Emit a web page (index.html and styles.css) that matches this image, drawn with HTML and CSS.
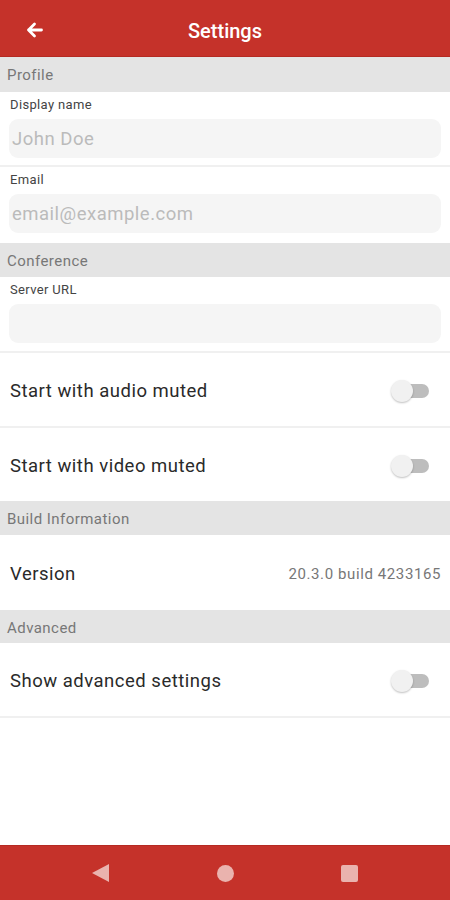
FILE: index.html
```html
<!DOCTYPE html>
<html lang="en">
<head>
  <meta charset="UTF-8">
  <title>Settings</title>
  <link rel="stylesheet" href="styles.css">
</head>
<body>
  <div class="app">
    <header class="topbar">
      <button class="back" aria-label="Back">
        <svg width="20" height="20" viewBox="0 0 20 20"><path d="M17.5 10H4.5M10.5 4L4.5 10L10.5 16" fill="none" stroke="#fff" stroke-width="2.8" stroke-linecap="round" stroke-linejoin="round"/></svg>
      </button>
      <h1>Settings</h1>
    </header>

    <main class="content">
      <div class="section-title first">Profile</div>
      <div class="field">
        <label>Display name</label>
        <div class="input placeholder">John Doe</div>
      </div>
      <div class="field last">
        <label>Email</label>
        <div class="input placeholder">email@example.com</div>
      </div>

      <div class="section-title">Conference</div>
      <div class="field server">
        <label>Server URL</label>
        <div class="input"></div>
      </div>
      <div class="row">
        <span>Start with audio muted</span>
        <span class="switch"><span class="knob"></span></span>
      </div>
      <div class="row last">
        <span>Start with video muted</span>
        <span class="switch"><span class="knob"></span></span>
      </div>

      <div class="section-title">Build Information</div>
      <div class="row last version">
        <span>Version</span>
        <span class="value">20.3.0 build 4233165</span>
      </div>

      <div class="section-title short">Advanced</div>
      <div class="row">
        <span>Show advanced settings</span>
        <span class="switch"><span class="knob"></span></span>
      </div>
    </main>

    <nav class="navbar">
      <span class="nav-back"></span>
      <span class="nav-home"></span>
      <span class="nav-recent"></span>
    </nav>
  </div>
</body>
</html>
```

FILE: styles.css
```css
body {
  margin: 0;
  font-family: Roboto, "Liberation Sans", sans-serif;
  background: #fff;
  color: #222;
}

.app {
  height: 900px;
  display: flex;
  flex-direction: column;
}

.topbar {
  height: 56px;
  background-color: #c5322a;
  border-bottom: 1px solid #b52a22;
  display: flex;
  align-items: center;
  justify-content: center;
  position: relative;
  flex-shrink: 0;
}

.topbar h1 {
  margin: 0;
  color: #fff;
  font-size: 20px;
  font-weight: 500;
  padding-top: 6px;
}

.back {
  position: absolute;
  left: 24px;
  top: 20px;
  background: none;
  border: none;
  padding: 0;
  width: 20px;
  height: 20px;
}

.content {
  flex: 1;
}

.section-title {
  height: 34px;
  line-height: 37px;
  background-color: #e4e4e4;
  color: #777;
  font-size: 15px;
  letter-spacing: 0.45px;
  padding-left: 7px;
}

.section-title.first {
  height: 35px;
}

.section-title.short {
  height: 33px;
  line-height: 36px;
}

.field {
  padding: 4px 9px 7px;
  border-bottom: 2px solid #f0f0f0;
}

.field.last {
  border-bottom: none;
  padding-bottom: 10px;
}

.field.server {
  padding-bottom: 8px;
}

.field label {
  display: block;
  font-size: 13px;
  letter-spacing: 0.35px;
  color: #444;
  height: 18px;
  line-height: 18px;
  padding-left: 1px;
  margin-bottom: 5px;
}

.input {
  height: 39px;
  line-height: 41px;
  background-color: #f5f5f5;
  border-radius: 9px;
  padding-left: 3px;
  font-size: 18.5px;
  letter-spacing: 0.5px;
}

.input.placeholder {
  color: #bbb;
}

.row {
  height: 75px;
  box-sizing: border-box;
  display: flex;
  align-items: center;
  justify-content: space-between;
  padding: 3px 9px 0 10px;
  font-size: 18.5px;
  letter-spacing: 0.5px;
  color: #2a2a2a;
  border-bottom: 2px solid #f0f0f0;
}

.row.last {
  border-bottom: none;
  height: 73px;
}

.row.version {
  height: 75px;
}

.row .value {
  font-size: 15px;
  letter-spacing: 0.6px;
  color: #777;
}

.switch {
  width: 34px;
  height: 14px;
  background-color: #bdbdbd;
  border-radius: 7px;
  position: relative;
  margin-right: 12px;
}

.knob {
  position: absolute;
  left: -4px;
  top: -4px;
  width: 22px;
  height: 22px;
  border-radius: 50%;
  background-color: #f1f1f1;
  box-shadow: 0 1px 2px rgba(0, 0, 0, 0.25);
}

.navbar {
  height: 54px;
  background-color: #c5322a;
  border-top: 1px solid #b52a22;
  display: flex;
  align-items: center;
  justify-content: space-between;
  padding: 0 92px 0 92px;
  flex-shrink: 0;
}

.nav-back {
  width: 0;
  height: 0;
  border-top: 9.5px solid transparent;
  border-bottom: 9.5px solid transparent;
  border-right: 17px solid #eab3ae;
}

.nav-home {
  width: 17px;
  height: 17px;
  border-radius: 50%;
  background-color: #eab3ae;
}

.nav-recent {
  width: 17px;
  height: 17px;
  border-radius: 2px;
  background-color: #eab3ae;
}
```
